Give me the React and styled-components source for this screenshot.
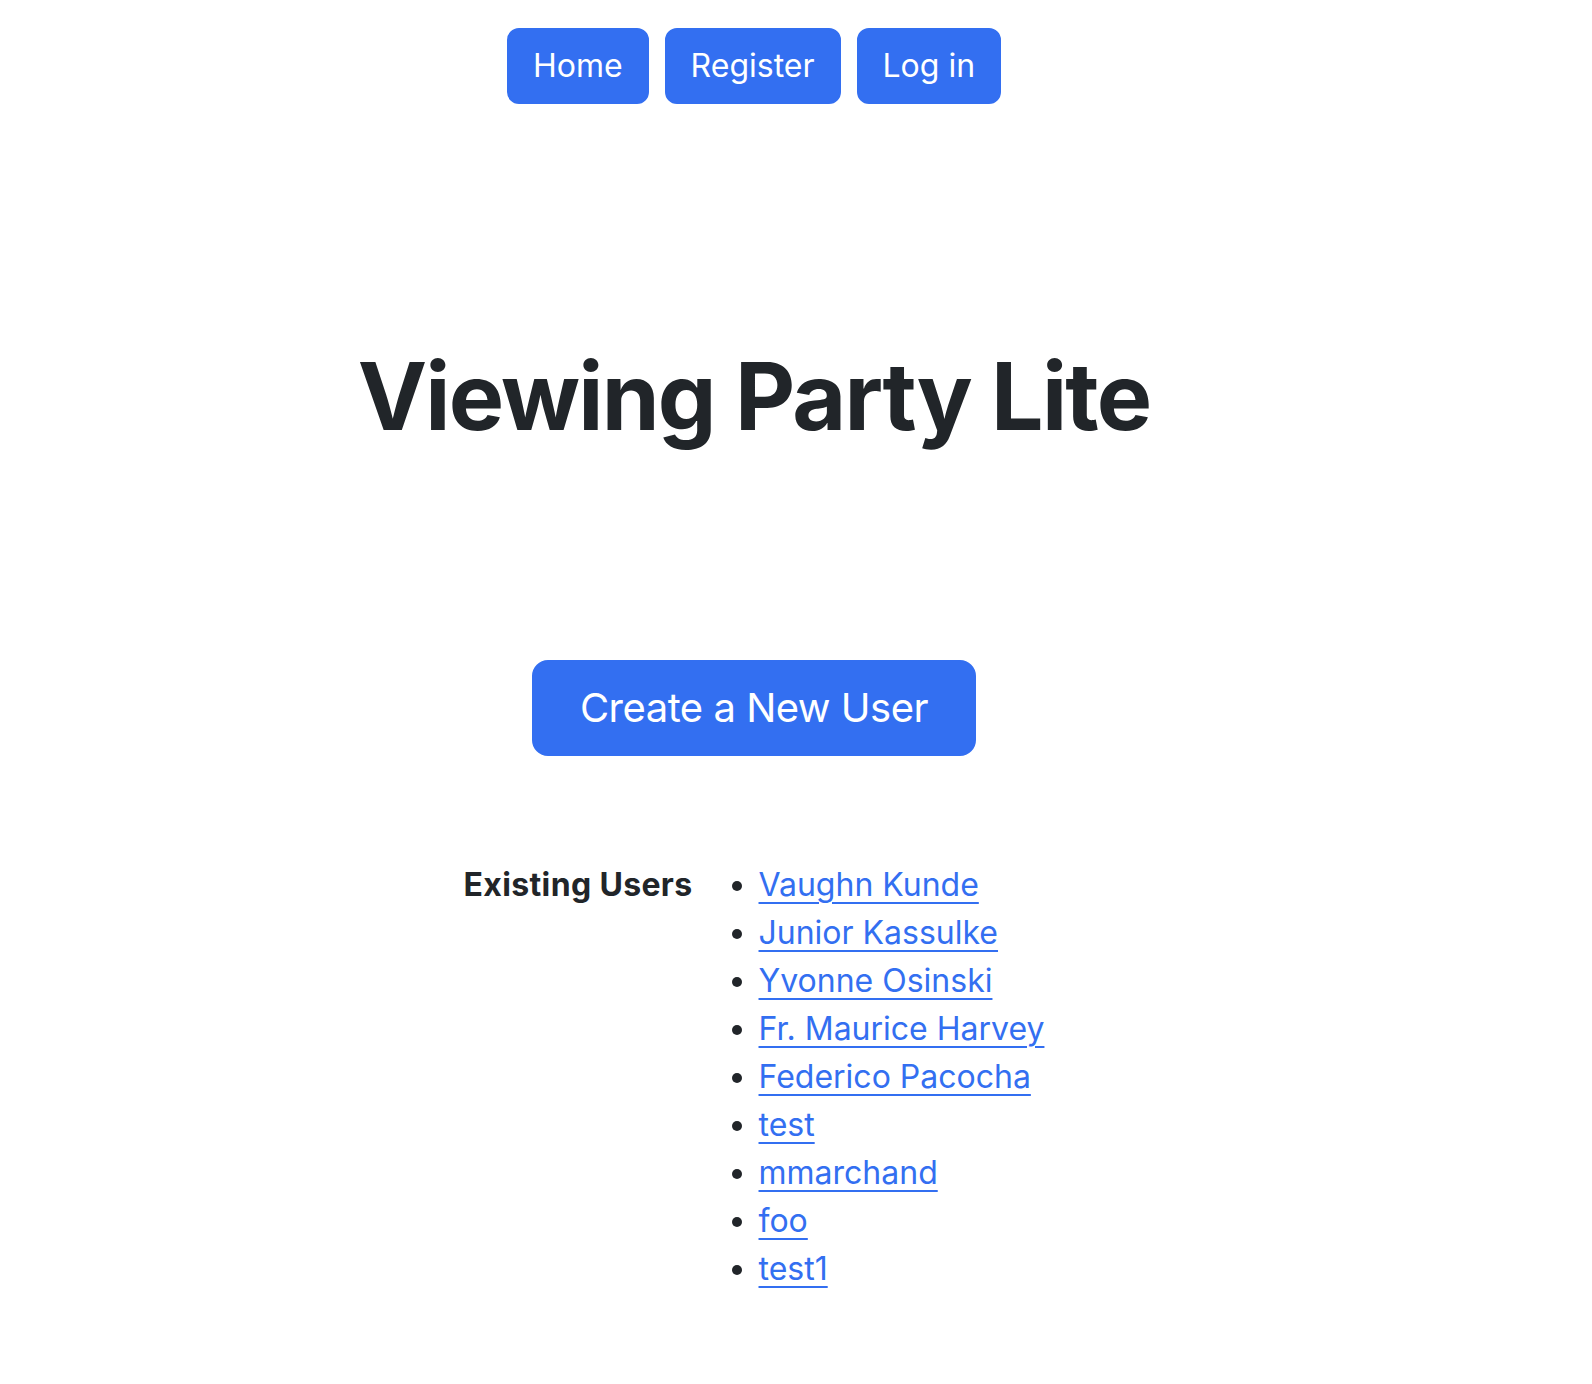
import styled, { createGlobalStyle } from "styled-components";

/* ───────────── GLOBAL ───────────── */

const Global = createGlobalStyle`
  html, body {
    margin: 0;
    padding: 0;
    background: #fff;
  }
  body {
    font-family: Inter, "Noto Sans", "Liberation Sans", sans-serif;
    font-size: 32px;
    line-height: 1.5;
    color: #212529;
  }
`;

const BLUE = "#336ff1";

/* ───────────── LAYOUT ───────────── */

const Page = styled.main`
  width: 1508px;
  padding-top: 28px;
  padding-bottom: 80px;
  display: flex;
  flex-direction: column;
  align-items: center;
`;

const Nav = styled.nav`
  display: flex;
  gap: 16px;
`;

const Btn = styled.a`
  display: inline-block;
  background: ${BLUE};
  border: 2px solid ${BLUE};
  color: #fff;
  text-decoration: none;
  font-size: ${(p) => (p.$lg ? "40px" : "32px")};
  letter-spacing: ${(p) => (p.$lg ? "-0.5px" : "0")};
  line-height: 1.5;
  padding: ${(p) => (p.$lg ? "16px 46px" : "12px 24px")};
  border-radius: ${(p) => (p.$lg ? "16px" : "12px")};
  cursor: pointer;
`;

const Title = styled.h1`
  margin: 237px 0 0;
  font-size: 93px;
  font-weight: 700;
  line-height: 1.2;
  letter-spacing: -1.8px;
`;

const CreateWrap = styled.div`
  margin-top: 207px;
`;

const UsersRow = styled.section`
  margin-top: 105px;
  display: flex;
  align-items: flex-start;
`;

const Label = styled.div`
  font-weight: 700;
  letter-spacing: 0.35px;
`;

const List = styled.ul`
  margin: 0;
  padding-left: 66px;
`;

const Item = styled.li`
  &::marker {
    color: #212529;
  }
`;

const UserLink = styled.a`
  color: ${BLUE};
  text-decoration: underline;
  text-underline-offset: 6px;
  text-decoration-thickness: 2px;
`;

const users = [
  "Vaughn Kunde",
  "Junior Kassulke",
  "Yvonne Osinski",
  "Fr. Maurice Harvey",
  "Federico Pacocha",
  "test",
  "mmarchand",
  "foo",
  "test1",
];

export default function App() {
  return (
    <>
      <Global />
      <Page>
        <Nav>
          <Btn href="#">Home</Btn>
          <Btn href="#">Register</Btn>
          <Btn href="#">Log in</Btn>
        </Nav>

        <Title>Viewing Party Lite</Title>

        <CreateWrap>
          <Btn $lg href="#">Create a New User</Btn>
        </CreateWrap>

        <UsersRow>
          <Label>Existing Users</Label>
          <List>
            {users.map((u) => (
              <Item key={u}>
                <UserLink href="#">{u}</UserLink>
              </Item>
            ))}
          </List>
        </UsersRow>
      </Page>
    </>
  );
}
